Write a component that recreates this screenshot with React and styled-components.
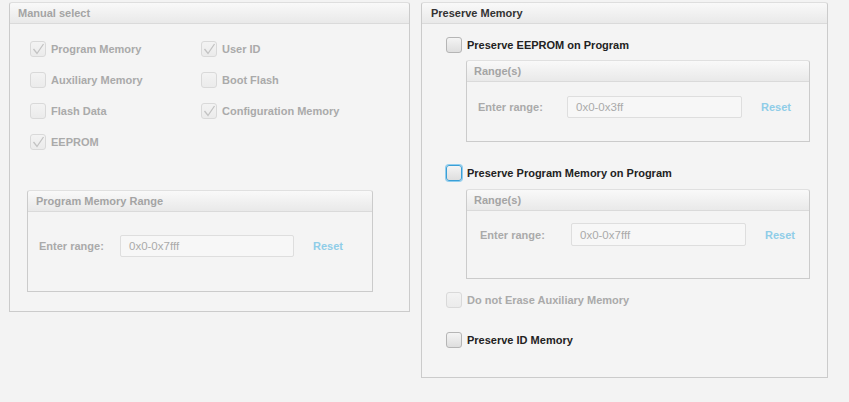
import styled, { createGlobalStyle } from "styled-components";

const GlobalStyle = createGlobalStyle`
  html, body {
    margin: 0;
    padding: 0;
    background: #f3f3f3;
    font-family: "Liberation Sans", Arial, sans-serif;
  }
`;

const Page = styled.div`
  display: flex;
  align-items: flex-start;
  gap: 11px;
  padding: 2px 0 0 9px;
`;

const Panel = styled.section`
  box-sizing: border-box;
  width: ${p => p.width}px;
  height: ${p => p.height}px;
  border: 1px solid #cbcbcb;
  border-top-color: #dedede;
  border-radius: 3px 3px 0 0;
  background: #f4f4f4;
  display: flex;
  flex-direction: column;
`;

const Header = styled.div`
  height: 20px;
  flex: none;
  display: flex;
  align-items: center;
  padding-left: ${p => p.inset || 8}px;
  background: linear-gradient(#f9f9f9, #e9e9e9);
  border-bottom: 1px solid #dadada;
  border-radius: 3px 3px 0 0;
  font-size: 11px;
  font-weight: bold;
  color: ${p => (p.dark ? "#333" : "#a4a4a4")};
`;

const CheckGrid = styled.div`
  display: grid;
  grid-template-columns: 171px 1fr;
  row-gap: 15px;
  padding: 17px 0 0 20px;
`;

const Item = styled.label`
  display: flex;
  align-items: center;
  gap: 5px;
  height: 16px;
  font-size: 11px;
  font-weight: bold;
  color: ${p => (p.disabled ? "#aaaaaa" : "#222")};
`;

const Box = styled.span`
  box-sizing: border-box;
  width: 16px;
  height: 16px;
  flex: none;
  display: flex;
  align-items: center;
  justify-content: center;
  border-radius: 3px;
  border: 1px solid
    ${p => (p.focused ? "#3a9fd6" : p.disabled ? "#d9d9d9" : "#b5b5b5")};
  box-shadow: ${p => (p.focused ? "0 0 0 1px #8fcdee" : "none")};
  background: ${p =>
    p.disabled
      ? "linear-gradient(#f3f3f3, #ebebeb)"
      : "linear-gradient(#f4f4f4, #dedede)"};
`;

const CheckBox = ({ checked, disabled, focused }) => (
  <Box disabled={disabled} focused={focused}>
    {checked && (
      <svg width="13" height="12" viewBox="0 0 13 12">
        <path
          d="M1.5 6 L5 10.5 L11.5 1"
          fill="none"
          stroke="#c2c2c2"
          strokeWidth="1.3"
        />
      </svg>
    )}
  </Box>
);

const Check = ({ label, checked, disabled, focused }) => (
  <Item disabled={disabled}>
    <CheckBox checked={checked} disabled={disabled} focused={focused} />
    {label}
  </Item>
);

const SubPanel = styled.div`
  box-sizing: border-box;
  width: ${p => p.width}px;
  border: 1px solid #cbcbcb;
  border-top-color: #e0e0e0;
  border-radius: 3px 3px 0 0;
  background: #f4f4f4;
  margin: ${p => p.margin};
`;

const RangeRow = styled.div`
  display: flex;
  align-items: center;
  padding: ${p => p.pad};
`;

const RangeLabel = styled.span`
  width: ${p => p.width}px;
  flex: none;
  font-size: 11px;
  font-weight: bold;
  color: #aaaaaa;
`;

const RangeInput = styled.div`
  box-sizing: border-box;
  width: ${p => p.width}px;
  height: ${p => p.height}px;
  border: 1px solid #dedede;
  border-radius: 2px;
  background: #f7f7f7;
  display: flex;
  align-items: center;
  padding-left: 8px;
  font-size: 11.5px;
  color: #aaaaaa;
`;

const Reset = styled.span`
  margin-left: 19px;
  font-size: 11px;
  font-weight: bold;
  color: #8fcde8;
`;

const Range = ({ title, value, width, margin, labelWidth, pad, inputWidth, inputHeight, titleInset }) => (
  <SubPanel width={width} margin={margin}>
    <Header inset={titleInset}>{title}</Header>
    <RangeRow pad={pad}>
      <RangeLabel width={labelWidth}>Enter range:</RangeLabel>
      <RangeInput width={inputWidth} height={inputHeight}>{value}</RangeInput>
      <Reset>Reset</Reset>
    </RangeRow>
  </SubPanel>
);

const RightBody = styled.div`
  display: flex;
  flex-direction: column;
  padding: 13px 0 0 24px;
`;

const Spacer = styled.div`
  height: ${p => p.h}px;
`;

export default function App() {
  return (
    <>
      <GlobalStyle />
      <Page>
        <Panel width={401} height={310}>
          <Header>Manual select</Header>
          <CheckGrid>
            <Check label="Program Memory" checked disabled />
            <Check label="User ID" checked disabled />
            <Check label="Auxiliary Memory" disabled />
            <Check label="Boot Flash" disabled />
            <Check label="Flash Data" disabled />
            <Check label="Configuration Memory" checked disabled />
            <Check label="EEPROM" checked disabled />
          </CheckGrid>
          <Range
            title="Program Memory Range"
            value="0x0-0x7fff"
            width={346}
            margin="40px 0 0 17px"
            titleInset={8}
            labelWidth={81}
            pad="23px 0 34px 11px"
            inputWidth={174}
            inputHeight={22}
          />
        </Panel>
        <Panel width={407} height={376}>
          <Header dark inset={9}>Preserve Memory</Header>
          <RightBody>
            <Check label="Preserve EEPROM on Program" />
            <Range
              title="Range(s)"
              value="0x0-0x3ff"
              width={344}
              margin="7px 0 0 20px"
              titleInset={7}
              labelWidth={89}
              pad="14px 0 23px 11px"
              inputWidth={175}
              inputHeight={22}
            />
            <Spacer h={23} />
            <Check label="Preserve Program Memory on Program" focused />
            <Range
              title="Range(s)"
              value="0x0-0x7fff"
              width={344}
              margin="8px 0 0 20px"
              titleInset={7}
              labelWidth={91}
              pad="12px 0 32px 13px"
              inputWidth={175}
              inputHeight={23}
            />
            <Spacer h={13} />
            <Check label="Do not Erase Auxiliary Memory" disabled />
            <Spacer h={24} />
            <Check label="Preserve ID Memory" />
          </RightBody>
        </Panel>
      </Page>
    </>
  );
}
